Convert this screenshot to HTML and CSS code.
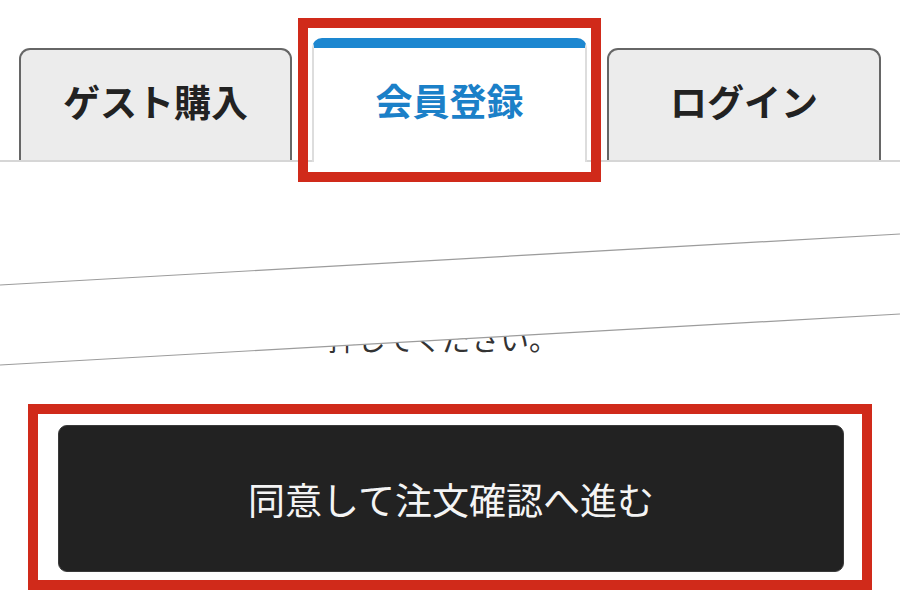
FILE: index.html
```html
<!DOCTYPE html>
<html lang="ja">
<head>
<meta charset="utf-8">
<title>会員登録</title>
<link rel="stylesheet" href="styles.css">
</head>
<body>
<div class="page">
  <div class="tabs">
    <div class="tab">ゲスト購入</div>
    <div class="tab tab-active">会員登録</div>
    <div class="tab">ログイン</div>
  </div>
  <div class="lower">
    <p class="note">押してください。</p>
    <div class="frame">
      <button class="submit">同意して注文確認へ進む</button>
    </div>
  </div>
  <div class="mark-tab"></div>
  <svg class="cut" width="900" height="600" viewBox="0 0 900 600">
    <line x1="0" y1="285" x2="900" y2="234"/>
    <line x1="0" y1="365" x2="900" y2="314"/>
  </svg>
</div>
</body>
</html>
```

FILE: styles.css
```css
html, body {
  margin: 0;
  padding: 0;
  background: #ffffff;
}
.page {
  position: relative;
  width: 900px;
  height: 600px;
  overflow: hidden;
  font-family: "Noto Sans CJK JP", "Noto Sans", sans-serif;
}
.tabs {
  display: flex;
  align-items: flex-end;
  gap: 20px;
  height: 122px;
  padding: 38px 0 0 19px;
  border-bottom: 2px solid #d6d6d6;
}
.tab {
  box-sizing: border-box;
  width: 273px;
  height: 112px;
  display: flex;
  align-items: center;
  justify-content: center;
  padding-bottom: 8px;
  background: #ececec;
  border: 2px solid #666666;
  border-bottom: none;
  border-radius: 11px 11px 0 0;
  font-size: 37px;
  font-weight: 700;
  color: #222222;
}
.tab-active {
  width: 275px;
  height: 124px;
  margin-bottom: -2px;
  padding-bottom: 10px;
  background: #ffffff;
  border: 2px solid #dddddd;
  border-top: 10px solid #1d87d0;
  border-bottom: none;
  border-radius: 10px 10px 0 0;
  color: #1b80c8;
}
.tab:last-child {
  width: 274px;
}
.lower {
  margin-top: 152px;
  height: 286px;
  clip-path: polygon(0 51px, 100% 0, 100% 100%, 0 100%);
}
.note {
  margin: 0;
  padding: 4px 14px 0 0;
  font-size: 29px;
  line-height: 40px;
  color: #333333;
  text-align: center;
}
.frame {
  box-sizing: border-box;
  width: 844px;
  margin: 46px 0 0 28px;
  border: 10px solid #d02a1a;
  padding: 11px 18px 8px 20px;
}
.submit {
  display: block;
  width: 786px;
  height: 147px;
  border: 1px solid #3a3a3a;
  border-radius: 9px;
  background: #222222;
  color: #f4f4f4;
  font-family: "Noto Sans CJK JP", "Noto Sans", sans-serif;
  font-size: 37px;
  font-weight: 400;
  padding: 0;
}
.mark-tab {
  position: absolute;
  left: 298px;
  top: 18px;
  width: 303px;
  height: 164px;
  box-sizing: border-box;
  border: 10px solid #d02a1a;
}
.cut {
  position: absolute;
  left: 0;
  top: 0;
  pointer-events: none;
}
.cut line {
  stroke: #9c9c9c;
  stroke-width: 1.2;
}
```
